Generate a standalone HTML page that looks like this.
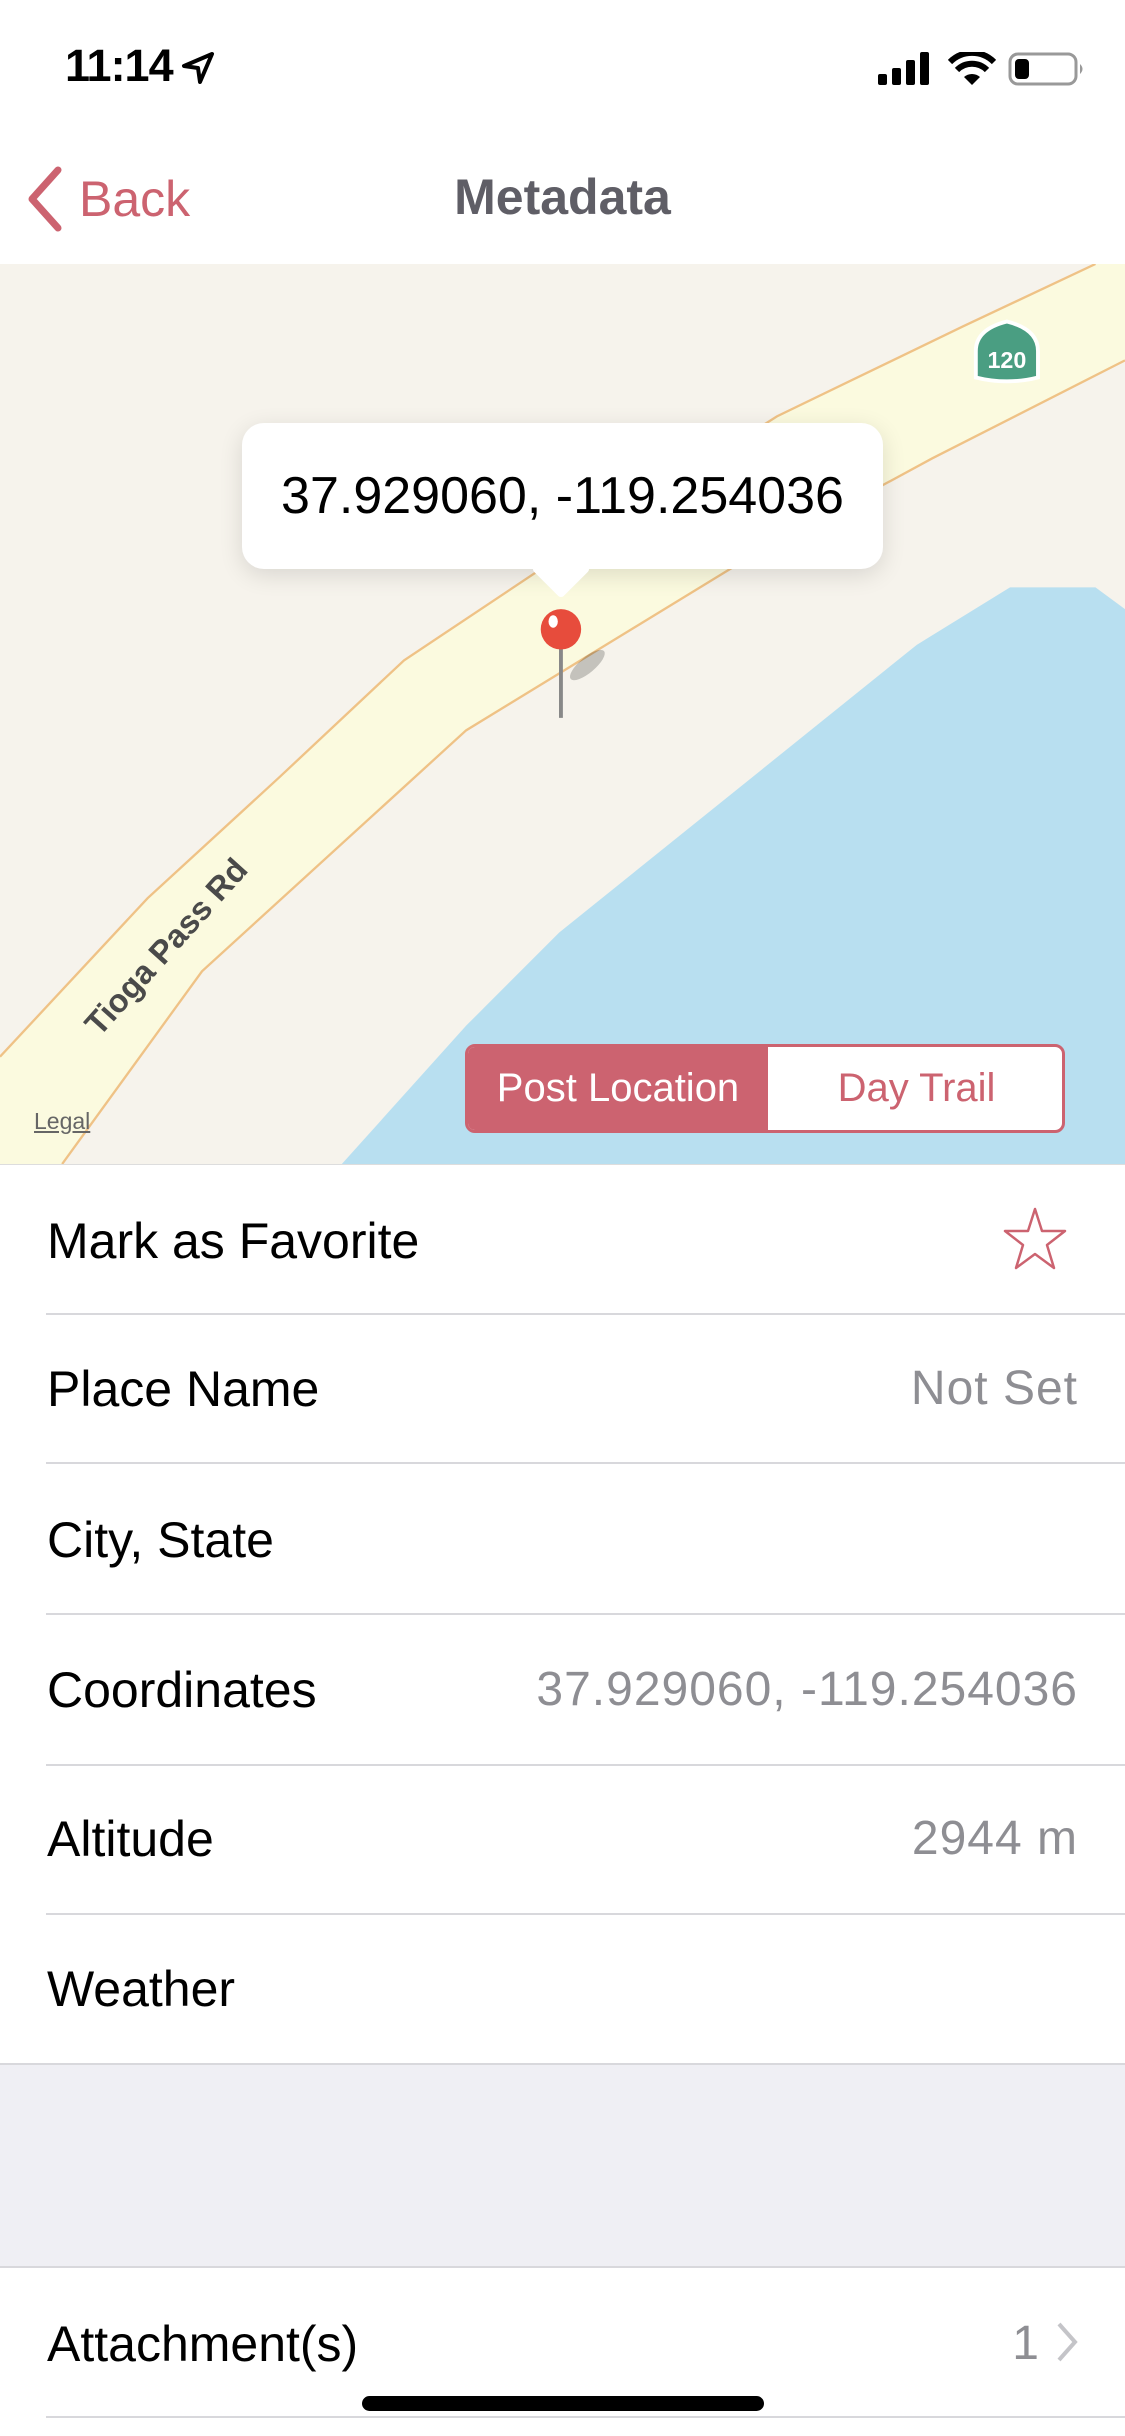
<!DOCTYPE html>
<html><head><meta charset="utf-8"><style>
*{margin:0;padding:0;box-sizing:border-box}
body{width:1125px;height:2436px;overflow:hidden;background:#fff;font-family:"Liberation Sans",sans-serif;position:relative}
.abs{position:absolute}
.lbl{position:absolute;left:47px;font-size:50px;color:#000}
.val{position:absolute;right:47px;font-size:48px;color:#8e8e93;letter-spacing:1px}
.sep{position:absolute;left:46px;right:0;height:2px;background:#d8d8dc}
</style></head><body>
<div class="abs" style="left:65px;top:40px;font-size:45px;font-weight:bold;letter-spacing:-1px">11:14</div>
<svg class="abs" style="left:180px;top:50px" width="36" height="36" viewBox="0 0 36 36"><path d="M32 4 L4 16 L18 18 L20 32 Z" fill="none" stroke="#000" stroke-width="4" stroke-linejoin="round"/></svg>
<svg class="abs" style="left:878px;top:52px" width="56" height="34"><rect x="0" y="22" width="9" height="11" rx="2"/><rect x="14" y="16" width="9" height="17" rx="2"/><rect x="28" y="8" width="9" height="25" rx="2"/><rect x="42" y="0" width="9" height="33" rx="2"/></svg>
<svg class="abs" style="left:948px;top:52px" width="48" height="34" viewBox="0 0 48 34"><path d="M24 33 L16 25 A12 12 0 0 1 32 25 Z"/><path d="M9 18 A21 21 0 0 1 39 18" fill="none" stroke="#000" stroke-width="6"/><path d="M2 10 A31 31 0 0 1 46 10" fill="none" stroke="#000" stroke-width="6"/></svg>
<svg class="abs" style="left:1008px;top:52px" width="80" height="34"><rect x="2" y="2" width="66" height="30" rx="8" fill="none" stroke="#999" stroke-width="3"/><rect x="7" y="7" width="14" height="20" rx="4" fill="#000"/><path d="M72 12 Q77 17 72 22 Z" fill="#999"/></svg>
<svg class="abs" style="left:24px;top:166px" width="40" height="66"><path d="M34 4 L8 33 L34 62" fill="none" stroke="#cc6370" stroke-width="7" stroke-linecap="round" stroke-linejoin="round"/></svg>
<div class="abs" style="left:79px;top:170px;font-size:50px;color:#cc6370">Back</div>
<div class="abs" style="left:0;width:1125px;top:168px;text-align:center;font-size:50px;font-weight:bold;color:#5f5e66">Metadata</div>
<svg class="abs" style="left:0;top:264px" width="1125" height="900" viewBox="0 170 724 579" preserveAspectRatio="none">
<rect x="0" y="170" width="724" height="579" fill="#f6f3ec"/>
<polygon points="220,749 300,660 360,600 590,415 650,378 705,378 724,392 724,749" fill="#b8dff0"/>
<polygon points="0,680 95,578 180,500 260,425 380,345 500,268 620,210 705,170 724,170 724,232 600,295 480,360 300,470 130,625 40,749 0,749" fill="#fbfadf"/>
<polyline points="0,680 95,578 180,500 260,425 380,345 500,268 620,210 705,170" fill="none" stroke="#efc286" stroke-width="1.5"/>
<polyline points="724,232 600,295 480,360 300,470 130,625 40,749" fill="none" stroke="#efc286" stroke-width="1.5"/>
<path d="M628 243 L628 226 Q628 212 648 207 Q668 212 668 226 L668 243 Q648 248 628 243Z" fill="#4a9e82" stroke="#fff" stroke-width="2.5"/>
<text x="648" y="237" font-size="15" font-weight="bold" fill="#fff" text-anchor="middle" font-family="Liberation Sans">120</text>
<text x="110" y="615" font-size="21" font-weight="bold" fill="#4a4a4a" text-anchor="middle" transform="rotate(-48 110 612)" font-family="Liberation Sans">Tioga Pass Rd</text>
<ellipse cx="378" cy="428" rx="14" ry="5" fill="#000" opacity="0.2" transform="rotate(-40 378 428)"/>
<line x1="361" y1="410" x2="361" y2="462" stroke="#888" stroke-width="2.5"/>
<circle cx="361" cy="405" r="13" fill="#e74c3c"/>
<ellipse cx="356" cy="400" rx="3" ry="4" fill="#fff"/>
</svg>
<div class="abs" style="left:242px;top:423px;width:641px;height:146px;background:#fff;border-radius:22px;box-shadow:0 6px 24px rgba(0,0,0,0.12);font-size:52px;line-height:146px;text-align:center;color:#000">37.929060, -119.254036</div>
<div class="abs" style="left:540px;top:548px;width:42px;height:42px;background:#fff;transform:rotate(45deg);border-radius:4px"></div>
<div class="abs" style="left:34px;top:1108px;font-size:23px;color:#666;text-decoration:underline">Legal</div>
<div class="abs" style="left:465px;top:1044px;width:600px;height:89px;border:3px solid #cc6370;border-radius:10px;background:#fff;overflow:hidden">
<div class="abs" style="left:0;top:0;width:300px;height:83px;background:#cc6370;color:#fff;font-size:40px;line-height:83px;text-align:center">Post Location</div>
<div class="abs" style="left:300px;top:0;width:297px;height:83px;color:#cc6370;font-size:40px;line-height:83px;text-align:center">Day Trail</div>
</div>
<div class="abs" style="left:0;top:1164px;width:1125px;height:1px;background:#ddd"></div>
<div class="lbl" style="top:1212px">Mark as Favorite</div>
<svg class="abs" style="left:1002px;top:1206px" width="66" height="66" viewBox="0 0 66 66"><path d="M33 3 L40 25 L63 25 L45 39 L52 62 L33 48 L14 62 L21 39 L3 25 L26 25 Z" fill="none" stroke="#cc6370" stroke-width="2.5" stroke-linejoin="round"/></svg>
<div class="sep" style="top:1313px"></div>
<div class="lbl" style="top:1360px">Place Name</div><div class="val" style="top:1361px">Not Set</div>
<div class="sep" style="top:1462px"></div>
<div class="lbl" style="top:1511px">City, State</div>
<div class="sep" style="top:1613px"></div>
<div class="lbl" style="top:1661px">Coordinates</div><div class="val" style="top:1662px">37.929060, -119.254036</div>
<div class="sep" style="top:1764px"></div>
<div class="lbl" style="top:1810px">Altitude</div><div class="val" style="top:1811px">2944 m</div>
<div class="sep" style="top:1913px"></div>
<div class="lbl" style="top:1960px">Weather</div>
<div class="abs" style="left:0;top:2063px;width:1125px;height:205px;background:#efeff4;border-top:2px solid #d8d8dc;border-bottom:2px solid #d8d8dc"></div>
<div class="lbl" style="top:2315px">Attachment(s)</div>
<div class="val" style="top:2316px;right:85px">1</div>
<svg class="abs" style="left:1055px;top:2320px" width="26" height="44"><path d="M4 4 L20 22 L4 40" fill="none" stroke="#c4c4c8" stroke-width="4"/></svg>
<div class="sep" style="top:2416px"></div>
<div class="abs" style="left:362px;top:2396px;width:402px;height:15px;background:#000;border-radius:8px"></div>
</body></html>
